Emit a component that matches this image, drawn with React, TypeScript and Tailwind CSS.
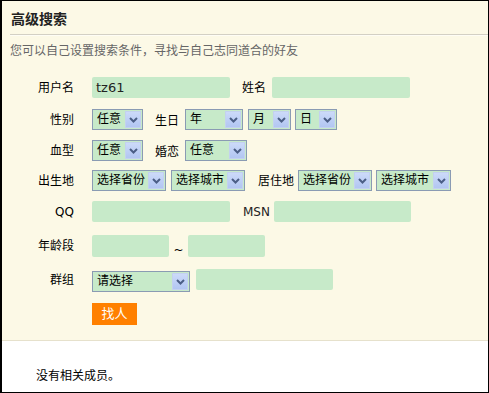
import React from "react";

const font = { fontFamily: '"DejaVu Sans", "Noto Sans CJK SC", sans-serif' };

function Chevron() {
  return (
    <svg width="9" height="6" viewBox="0 0 9 6">
      <path d="M1 1 L4.5 4.5 L8 1" fill="none" stroke="#4b5e86" strokeWidth="2" />
    </svg>
  );
}

function FakeSelect({ label, w }: { label: string; w: string }) {
  return (
    <div className={`${w} h-[21px] flex border border-[#8a9bb3] bg-[#c7eac9] shrink-0`}>
      <div className="flex-1 pl-[4px] text-[12px] leading-[19px] text-black whitespace-nowrap overflow-hidden">{label}</div>
      <div className="w-[16px] my-[1px] mr-[1px] flex items-center justify-center bg-gradient-to-b from-[#ccdaf9] to-[#b2c6f2] border border-[#c3d1ef]">
        <Chevron />
      </div>
    </div>
  );
}

function Field({ w, value }: { w: string; value?: string }) {
  return (
    <div className={`${w} h-[21px] rounded-[2px] bg-[#c7eac9] pl-[4px] text-[13px] leading-[21px] text-[#222] shrink-0`}>
      {value}
    </div>
  );
}

function Label({ text }: { text: string }) {
  return <div className="w-[72px] mr-[18px] text-right text-[12px] text-black shrink-0">{text}</div>;
}

export default function App() {
  return (
    <div className="w-[489px] h-[393px] border-l-2 border-t border-r border-b border-black bg-white overflow-hidden" style={font}>
      <div className="bg-[#fcf9e6] h-[340px] border-b border-[#e6e1cc]">
        <div className="pl-[9px] pt-[9px] h-[33px] text-[14px] font-bold leading-[18px] text-[#222]">高级搜索</div>
        <div className="ml-[8px] h-[2px] border-t border-[#d3d0c4] bg-white/60"></div>
        <div className="pl-[8px] pt-[7px] text-[12px] leading-[16px] text-[#666]">您可以自己设置搜索条件，寻找与自己志同道合的好友</div>

        <div className="flex flex-col mt-[18px]">
          <div className="flex items-center h-[21px]">
            <Label text="用户名" />
            <Field w="w-[138px]" value="tz61" />
            <div className="ml-[12px] mr-[6px] text-[12px]">姓名</div>
            <Field w="w-[138px]" />
          </div>

          <div className="flex items-center h-[21px] mt-[11px]">
            <Label text="性别" />
            <FakeSelect label="任意" w="w-[51px]" />
            <div className="ml-[12px] mr-[6px] text-[12px] pt-[3px]">生日</div>
            <FakeSelect label="年" w="w-[58px]" />
            <div className="ml-[5px]"><FakeSelect label="月" w="w-[43px]" /></div>
            <div className="ml-[4px]"><FakeSelect label="日" w="w-[42px]" /></div>
          </div>

          <div className="flex items-center h-[21px] mt-[10px]">
            <Label text="血型" />
            <FakeSelect label="任意" w="w-[51px]" />
            <div className="ml-[12px] mr-[6px] text-[12px] pt-[3px]">婚恋</div>
            <FakeSelect label="任意" w="w-[62px]" />
          </div>

          <div className="flex items-center h-[21px] mt-[9px]">
            <Label text="出生地" />
            <FakeSelect label="选择省份" w="w-[74px]" />
            <div className="ml-[5px]"><FakeSelect label="选择城市" w="w-[74px]" /></div>
            <div className="ml-[13px] mr-[4px] text-[12px]">居住地</div>
            <FakeSelect label="选择省份" w="w-[74px]" />
            <div className="ml-[4px]"><FakeSelect label="选择城市" w="w-[75px]" /></div>
          </div>

          <div className="flex items-center h-[21px] mt-[10px]">
            <Label text="QQ" />
            <Field w="w-[138px]" />
            <div className="ml-[13px] mr-[4px] text-[12px] text-[#222]">MSN</div>
            <Field w="w-[137px]" />
          </div>

          <div className="flex items-center h-[22px] mt-[13px]">
            <Label text="年龄段" />
            <Field w="w-[77px] h-[22px]" />
            <div className="w-[19px] text-center text-[12px] pt-[8px]">~</div>
            <Field w="w-[77px] h-[22px]" />
          </div>

          <div className="flex items-start h-[22px] mt-[14px]">
            <Label text="群组" />
            <FakeSelect label="请选择" w="w-[98px]" />
            <div className="ml-[6px] -mt-[2px]"><Field w="w-[137px]" /></div>
          </div>

          <div className="flex mt-[10px]">
            <div className="w-[72px] mr-[18px] shrink-0"></div>
            <div className="w-[45px] h-[22px] bg-[#ff8000] text-white text-[13px] leading-[22px] text-center">找人</div>
          </div>
        </div>
      </div>
      <div className="pl-[34px] pt-[27px] text-[12px] leading-[16px] text-black">没有相关成员。</div>
    </div>
  );
}
